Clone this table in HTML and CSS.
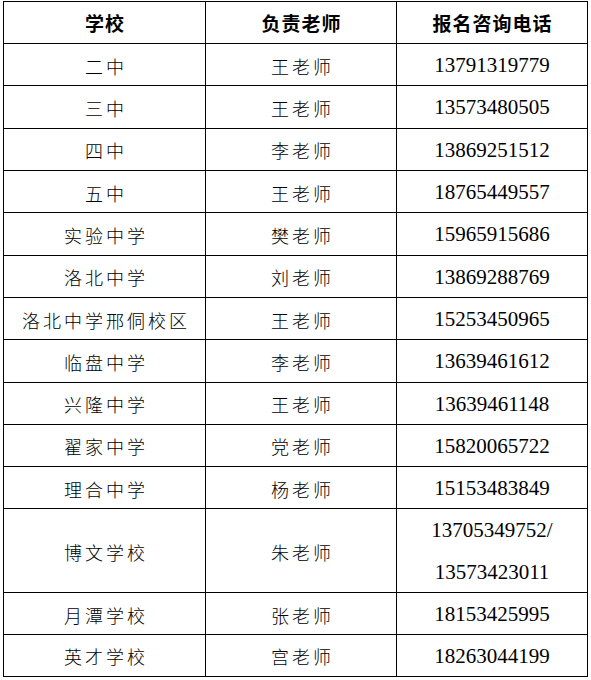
FILE: index.html
```html
<!DOCTYPE html>
<html lang="zh-CN">
<head>
<meta charset="utf-8">
<title>报名咨询电话</title>
<link rel="stylesheet" href="styles.css">
</head>
<body>
<div class="page">
  <div class="table">
    <div class="cell head">学校</div>
    <div class="cell head">负责老师</div>
    <div class="cell head">报名咨询电话</div>

    <div class="cell cn">二中</div><div class="cell cn">王老师</div><div class="cell tel">13791319779</div>
    <div class="cell cn">三中</div><div class="cell cn">王老师</div><div class="cell tel">13573480505</div>
    <div class="cell cn">四中</div><div class="cell cn">李老师</div><div class="cell tel">13869251512</div>
    <div class="cell cn">五中</div><div class="cell cn">王老师</div><div class="cell tel">18765449557</div>
    <div class="cell cn">实验中学</div><div class="cell cn">樊老师</div><div class="cell tel">15965915686</div>
    <div class="cell cn">洛北中学</div><div class="cell cn">刘老师</div><div class="cell tel">13869288769</div>
    <div class="cell cn">洛北中学邢侗校区</div><div class="cell cn">王老师</div><div class="cell tel">15253450965</div>
    <div class="cell cn">临盘中学</div><div class="cell cn">李老师</div><div class="cell tel">13639461612</div>
    <div class="cell cn">兴隆中学</div><div class="cell cn">王老师</div><div class="cell tel">13639461148</div>
    <div class="cell cn">翟家中学</div><div class="cell cn">党老师</div><div class="cell tel">15820065722</div>
    <div class="cell cn">理合中学</div><div class="cell cn">杨老师</div><div class="cell tel">15153483849</div>
    <div class="cell cn">博文学校</div><div class="cell cn">朱老师</div><div class="cell tel multi">13705349752/<br>13573423011</div>
    <div class="cell cn">月潭学校</div><div class="cell cn">张老师</div><div class="cell tel">18153425995</div>
    <div class="cell cn">英才学校</div><div class="cell cn">宫老师</div><div class="cell tel">18263044199</div>
  </div>
</div>
</body>
</html>
```

FILE: styles.css
```css
html, body {
  margin: 0;
  padding: 0;
  background: #ffffff;
}

.page {
  padding: 1px 0 0 3px;
}

.table {
  display: grid;
  grid-template-columns: 202px 191px 191px;
  grid-template-rows: 42px repeat(11, 42.32px) 84px 41.5px 42px;
  width: 585px;
  box-sizing: border-box;
  border-top: 1px solid #000;
  border-left: 1px solid #000;
}

.cell {
  box-sizing: border-box;
  border-right: 1px solid #000;
  border-bottom: 1px solid #000;
  display: flex;
  align-items: center;
  justify-content: center;
  text-align: center;
  color: #000;
  white-space: nowrap;
}

.head {
  font-family: "Noto Sans CJK SC", sans-serif;
  font-weight: 700;
  font-size: 19px;
  letter-spacing: 1px;
  padding-left: 1px;
}

.cn {
  font-family: "Noto Sans CJK SC", sans-serif;
  font-weight: 300;
  font-size: 18px;
  letter-spacing: 3px;
  padding-left: 3px;
  padding-top: 2px;
}

.tel {
  font-family: "Liberation Serif", "Times New Roman", serif;
  font-size: 21px;
  padding-top: 2px;
}

.tel.multi {
  line-height: 42px;
  padding-top: 0;
}
```
